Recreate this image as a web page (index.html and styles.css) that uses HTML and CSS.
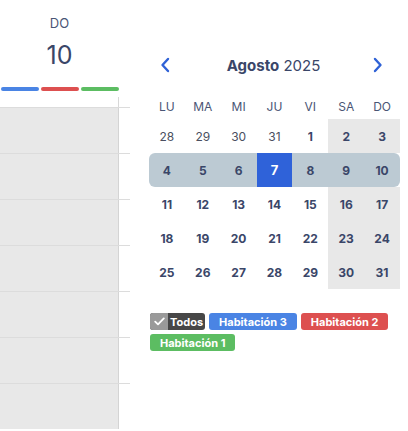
FILE: index.html
```html
<!DOCTYPE html>
<html lang="es">
<head>
<meta charset="utf-8">
<link rel="stylesheet" href="styles.css">
</head>
<body>
<div class="page">
  <div class="daycol">
    <div class="dayhead">
      <div class="dow">DO</div>
      <div class="dnum">10</div>
      <div class="bars">
        <span class="bar blue"></span>
        <span class="bar red"></span>
        <span class="bar green"></span>
      </div>
    </div>
    <div class="grid">
      <div class="gap"></div>
      <div class="slot"><div class="slot-in"></div></div>
      <div class="slot"><div class="slot-in"></div></div>
      <div class="slot"><div class="slot-in"></div></div>
      <div class="slot"><div class="slot-in"></div></div>
      <div class="slot"><div class="slot-in"></div></div>
      <div class="slot"><div class="slot-in"></div></div>
      <div class="slot"><div class="slot-in"></div></div>
    </div>
  </div>
  <div class="cal">
    <div class="nav">
      <svg class="arrow" width="10" height="16" viewBox="0 0 10 16"><path d="M8 2 L2.5 8 L8 14" fill="none" stroke="#2f62d6" stroke-width="2.4" stroke-linecap="round" stroke-linejoin="round"/></svg>
      <div class="title"><b>Agosto</b> 2025</div>
      <svg class="arrow" width="10" height="16" viewBox="0 0 10 16"><path d="M2 2 L7.5 8 L2 14" fill="none" stroke="#2f62d6" stroke-width="2.4" stroke-linecap="round" stroke-linejoin="round"/></svg>
    </div>
    <div class="wk head">
      <span>LU</span><span>MA</span><span>MI</span><span>JU</span><span>VI</span><span>SA</span><span>DO</span>
    </div>
    <div class="wk">
      <span class="o">28</span><span class="o">29</span><span class="o">30</span><span class="o">31</span><span>1</span><span class="we">2</span><span class="we">3</span>
    </div>
    <div class="wk sel">
      <span>4</span><span>5</span><span>6</span><span class="today">7</span><span>8</span><span>9</span><span>10</span>
    </div>
    <div class="wk">
      <span>11</span><span>12</span><span>13</span><span>14</span><span>15</span><span class="we">16</span><span class="we">17</span>
    </div>
    <div class="wk">
      <span>18</span><span>19</span><span>20</span><span>21</span><span>22</span><span class="we">23</span><span class="we">24</span>
    </div>
    <div class="wk">
      <span>25</span><span>26</span><span>27</span><span>28</span><span>29</span><span class="we">30</span><span class="we">31</span>
    </div>
    <div class="legend">
      <span class="tag all"><span class="chk"><svg width="11" height="9" viewBox="0 0 11 9"><path d="M1.2 4.6 L4 7.4 L9.8 1.4" fill="none" stroke="#fff" stroke-width="1.8" stroke-linecap="round" stroke-linejoin="round"/></svg></span><span class="lbl">Todos</span></span>
      <span class="tag bl">Habitación 3</span>
      <span class="tag rd">Habitación 2</span>
      <span class="tag gr">Habitación 1</span>
    </div>
  </div>
</div>
</body>
</html>
```
FILE: styles.css
```css
* { box-sizing: border-box; }
body {
  margin: 0;
  background: #fff;
  font-family: Inter, "Liberation Sans", sans-serif;
  color: #3a4668;
}
.page {
  display: flex;
  align-items: flex-start;
}
.daycol {
  width: 130px;
  flex: none;
}
.dayhead {
  width: 119px;
  text-align: center;
  padding-top: 14px;
  height: 97px;
}
.dow {
  font-size: 13px;
  line-height: 18px;
  color: #4a5575;
}
.dnum {
  font-size: 25px;
  line-height: 30px;
  margin-top: 8px;
  color: #3a4668;
}
.bars {
  display: flex;
  gap: 2px;
  padding-left: 1px;
  margin-top: 17px;
}
.bar {
  flex: 1;
  height: 3.5px;
  border-radius: 2px;
}
.blue { background: #4a84e4; }
.red { background: #dd5050; }
.green { background: #5cbd62; }
.grid { width: 130px; }
.gap {
  width: 119px;
  height: 10px;
  border-right: 1px solid #d8d8d8;
}
.slot {
  height: 46px;
  border-top: 1px solid #dcdcdc;
}
.slot-in {
  width: 119px;
  height: 100%;
  background: #e8e8e8;
  border-right: 1px solid #d4d4d4;
}
.cal {
  width: 251px;
  margin-left: 19px;
  flex: none;
}
.nav {
  display: flex;
  align-items: center;
  justify-content: space-between;
  padding: 0 17px 0 11px;
  margin-top: 56px;
  height: 18px;
}
.arrow { display: block; }
.title {
  font-size: 15px;
  color: #3a4668;
  margin-left: 4px;
}
.title b { font-weight: 700; }
.wk {
  display: grid;
  grid-template-columns: repeat(7, 1fr);
  height: 34px;
}
.wk span {
  display: flex;
  align-items: center;
  justify-content: center;
  font-size: 12px;
  font-weight: 700;
  color: #3a4668;
}
.wk.head {
  margin-top: 20px;
  height: 25px;
}
.wk.head span {
  font-weight: 400;
  color: #4a5575;
}
.wk span.o {
  font-weight: 400;
  color: #4a4f60;
}
.wk span.we { background: #e8e8e8; }
.wk.sel {
  background: #bccad3;
  border-radius: 6px;
}
.wk span.today {
  background: #2f62d9;
  color: #fff;
  font-size: 13px;
}
.legend {
  display: flex;
  flex-wrap: wrap;
  gap: 4px;
  margin-top: 24px;
  margin-left: 1px;
}
.tag {
  height: 17px;
  border-radius: 3px;
  font-size: 11px;
  font-weight: 700;
  color: #fff;
  display: flex;
  align-items: center;
  padding: 0 10px;
}
.tag.all {
  padding: 0;
  overflow: hidden;
  background: #474747;
}
.chk {
  width: 18px;
  height: 100%;
  background: #9a9a9a;
  display: flex;
  align-items: center;
  justify-content: center;
}
.lbl { padding: 0 2px 0 2px; }
.bl { background: #4a84e4; }
.rd { background: #dd5050; }
.gr { background: #5cbd62; }
```
